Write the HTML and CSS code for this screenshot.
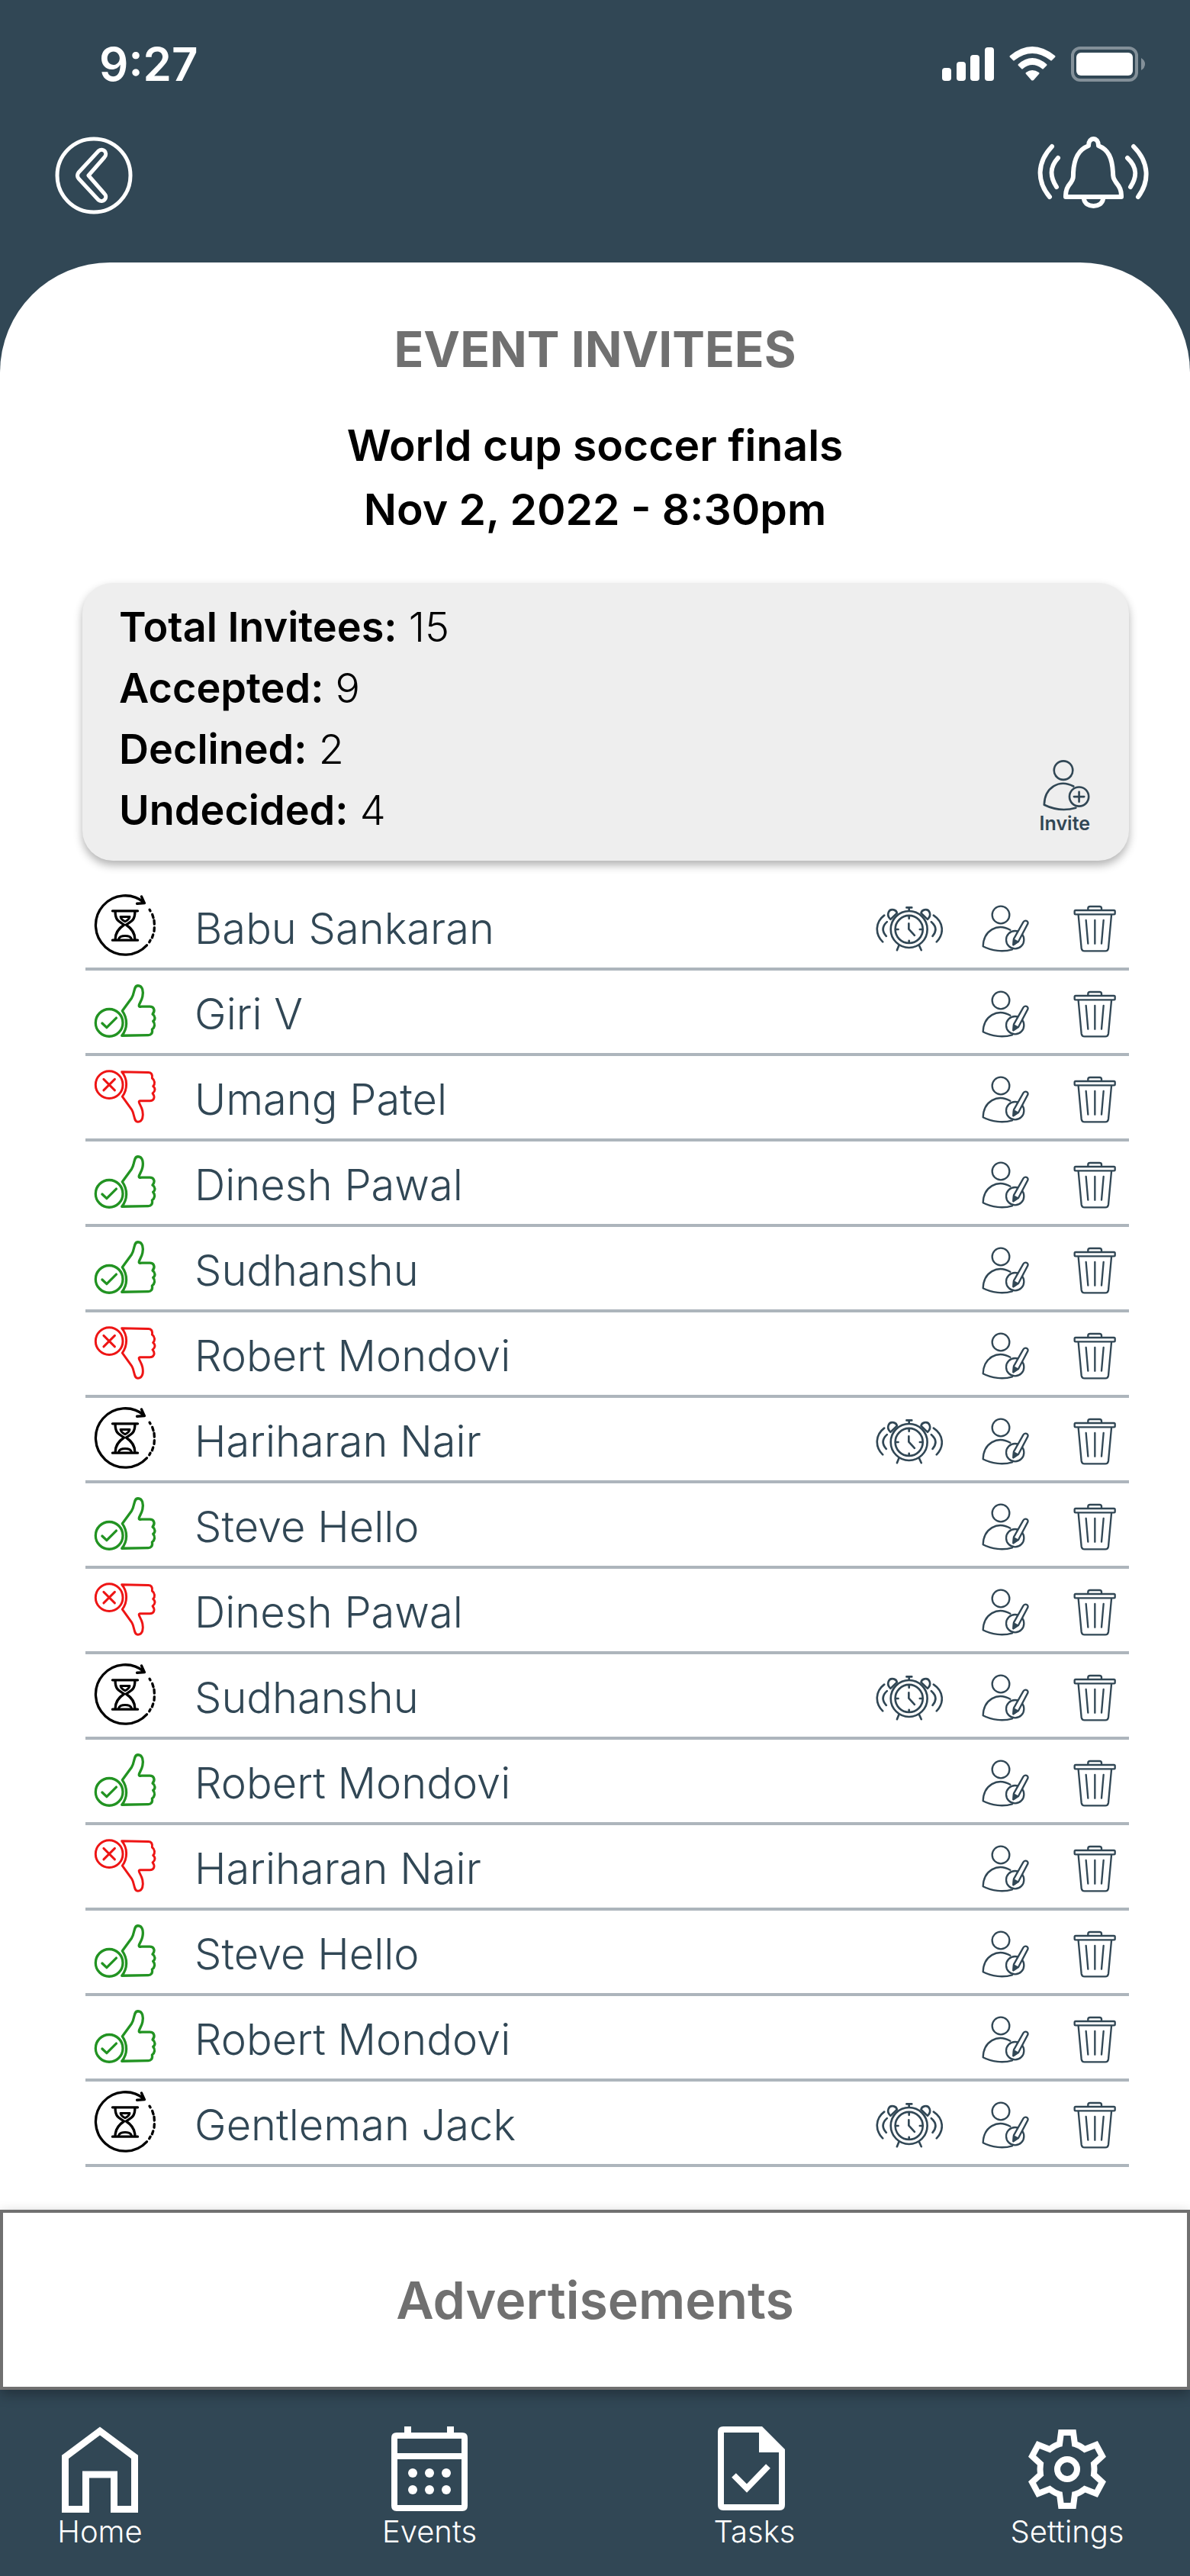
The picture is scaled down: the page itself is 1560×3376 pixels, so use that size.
FILE: index.html
```html
<!DOCTYPE html>
<html lang="en">
<head>
<meta charset="utf-8">
<meta name="viewport" content="width=device-width, initial-scale=1">
<title>Event Invitees</title>
<link rel="stylesheet" href="styles.css">
</head>
<body>
<svg class="sprite" aria-hidden="true">
  <symbol id="i-pending" viewBox="68 62 248 248">
    <g fill="none" stroke="#000" stroke-width="10" stroke-linecap="round" stroke-linejoin="round">
      <path d="M268 95A117 117 0 1 0 278 264M257 71L269 97L239 99"/>
      <path d="M289 123l3 5M300 142l4 13M307 165l1 15M308 194l-1 14M303 222l-4 12M292 244l-4 8"/>
      <path d="M142 128H242M142 244H242M153 131C153 170 172 170 188 183C165 198 153 215 153 241M231 131C231 170 212 170 196 183C219 198 231 215 231 241"/>
      <path d="M174 151H210C208 162 200 166 192 170C184 166 176 162 174 151ZM166 240C172 222 212 222 218 240" stroke-width="9"/>
    </g>
  </symbol>
  <symbol id="i-accepted" viewBox="68 410 248 215">
    <g fill="none" stroke="#229322" stroke-width="10" stroke-linecap="round" stroke-linejoin="round">
      <circle cx="129" cy="564" r="54"/>
      <path d="M101 566L119 583L157 545"/>
      <path d="M181 517L218 466C231 446 225 417 243 417C262 418 265 440 261 460C257 480 246 490 247 496C247 502 252 500 258 500H290C306 500 313 515 301 530C312 538 313 550 303 558C312 568 310 582 299 590C302 606 294 613 284 613L179 615C202 588 203 548 181 517Z"/>
    </g>
  </symbol>
  <symbol id="i-declined" viewBox="68 410 248 215">
    <g fill="none" stroke="#ee1515" stroke-width="9" stroke-linecap="round" stroke-linejoin="round" transform="translate(0 1035) scale(1 -1)">
      <circle cx="129" cy="564" r="54"/>
      <path d="M107 542L151 586M151 542L107 586"/>
      <path d="M181 517L218 466C231 446 225 417 243 417C262 418 265 440 261 460C257 480 246 490 247 496C247 502 252 500 258 500H290C306 500 313 515 301 530C312 538 313 550 303 558C312 568 310 582 299 590C302 606 294 613 284 613L179 615C202 588 203 548 181 517Z"/>
    </g>
  </symbol>
  <symbol id="i-alarm" viewBox="82 94 268 180">
    <g fill="none" stroke="#314755" stroke-width="8" stroke-linecap="round" stroke-linejoin="round">
      <circle cx="215" cy="187" r="73"/><circle cx="215" cy="187" r="55"/>
      <path d="M215 134V144M215 232V240M162 187H172M258 187H268M214 164V186L237 211M205 100H226M215 102V112M175 250L167 270M255 250L264 270"/>
      <path d="M141 147C122 128 134 104 154 109C162 111 166 117 167 122L141 147ZM289 147C308 128 296 104 276 109C268 111 264 117 263 122L289 147Z"/>
      <path d="M116 131C80 158 78 205 110 237M127 157C107 175 107 195 124 214M313 131C354 158 356 205 325 237M304 157C325 175 325 195 309 214"/>
    </g>
  </symbol>
  <symbol id="i-edit" viewBox="501 92 186 186">
    <g fill="none" stroke="#314755" stroke-width="7" stroke-linecap="round" stroke-linejoin="round">
      <circle cx="576" cy="131" r="34"/>
      <path d="M613 190C562 162 508 192 506 255C540 273 585 278 621 267"/>
      <circle cx="632" cy="229" r="35"/>
      <path d="M664 160L627 225L625 249L645 236L682 166C686 155 670 149 664 160Z" fill="#fff"/>
      <path d="M627 229L641 236L626 248Z" fill="#314755"/>
    </g>
  </symbol>
  <symbol id="i-trash" viewBox="862 92 168 186">
    <g fill="none" stroke="#314755" stroke-width="7" stroke-linecap="round" stroke-linejoin="round">
      <rect x="867" y="113" width="159" height="16" rx="4"/>
      <path d="M920 111V105Q920 98 928 98H965Q973 98 973 105V111M882 132L894 262Q896 273 906 273H988Q998 273 1000 262L1012 132M912 152L920 244M947 152V244M981 152L973 244"/>
    </g>
  </symbol>
</svg>

<div class="app">
  <header class="top">
    <div class="statusbar">
      <span class="clock">9:27</span>
      <div class="indicators">
        <svg width="68" height="46" viewBox="0 0 68 46" fill="#fff" role="img" aria-label="Signal">
          <rect x="0" y="28" width="12" height="17" rx="4"/><rect x="19" y="20" width="12" height="25" rx="4"/><rect x="37" y="11" width="12" height="34" rx="4"/><rect x="56" y="1" width="12" height="44" rx="4"/>
        </svg>
        <svg width="61" height="46" viewBox="0 0 61 46" fill="#fff" role="img" aria-label="Wi-Fi">
          <path d="M1 12Q30 -12 60 12Q61 13 60 14L56 18Q55 19 54 18Q30 0 7 18Q6 19 5 18L1 14Q0 13 1 12ZM12 23Q30 7 49 23Q50 24 49 25L45 29Q44 30 43 29Q30 19 18 29Q17 30 16 29L12 25Q11 24 12 23ZM22 34Q30 28 39 34Q40 35 39 36L32 44Q30 45 29 44L22 36Q21 35 22 34Z"/>
        </svg>
        <svg width="98" height="46" viewBox="0 0 98 46" role="img" aria-label="Battery">
          <rect x="2" y="2" width="84" height="42" rx="10" fill="none" stroke="#fff" stroke-opacity=".4" stroke-width="4"/>
          <rect x="7" y="8" width="74" height="30" rx="6" fill="#fff"/>
          <path d="M92 15Q97 18 97 23Q97 28 92 31Z" fill="#fff" fill-opacity=".4"/>
        </svg>
      </div>
    </div>
    <div class="toolbar">
      <button class="icon-btn" type="button" aria-label="Back">
        <svg width="102" height="102" viewBox="0 0 102 102" fill="none" stroke="#fff" stroke-width="5" stroke-linejoin="round">
          <circle cx="51" cy="51" r="48"/>
          <path d="M57 19L31 47Q28 51 31 55L57 83C63 88 70 80 65 75L44 51L65 27C70 21 63 14 57 19Z"/>
        </svg>
      </button>
      <button class="icon-btn" type="button" aria-label="Notifications">
        <svg width="146" height="94" viewBox="0 0 146 94" fill="none" stroke="#fff" stroke-width="6" stroke-linecap="round" stroke-linejoin="round">
          <path d="M67 12C67 0 80 0 80 12C93 17 98 28 99 47C99 54 100 55 103 60C108 66 110 70 110 79H37C37 70 39 66 44 60C47 55 47 54 47 47C48 28 54 17 67 12Z"/>
          <path d="M61 82C63 94 84 94 86 82"/>
          <path d="M19 13C-1 34 -1 59 16 79M27 28C16 40 16 52 25 66M126 13C147 34 147 59 132 79M118 28C131 40 131 52 122 66"/>
        </svg>
      </button>
    </div>
  </header>

  <main class="sheet">
    <h1 class="title">EVENT INVITEES</h1>
    <p class="event">World cup soccer finals<br>Nov 2, 2022 - 8:30pm</p>

    <section class="summary">
      <dl class="counts">
        <div><dt>Total Invitees:</dt> <dd>15</dd></div>
        <div><dt>Accepted:</dt> <dd>9</dd></div>
        <div><dt>Declined:</dt> <dd>2</dd></div>
        <div><dt>Undecided:</dt> <dd>4</dd></div>
      </dl>
      <button class="invite" type="button">
        <svg width="62" height="68" viewBox="741 103 186 205" fill="none" stroke="#314755" stroke-width="8" stroke-linecap="round" stroke-linejoin="round" aria-hidden="true">
          <circle cx="822" cy="147" r="37"/>
          <path d="M862 210C805 180 748 215 746 283C785 302 830 307 871 295M864 251H904M884 232V271"/>
          <circle cx="884" cy="251" r="38"/>
        </svg>
        Invite
      </button>
    </section>

    <ul class="list" id="invitees"></ul>
  </main>

  <aside class="ad">Advertisements</aside>

  <nav class="tabs">
    <a class="tab" href="#home">
      <svg width="100" height="113" viewBox="0 0 100 113" fill="none" stroke="#fff" stroke-width="9" aria-hidden="true"><path d="M4.500 40L50 6L95.500 40V108.500H68.500V63H31.500V108.500H4.500Z"/></svg>
      <span>Home</span>
    </a>
    <a class="tab" href="#events">
      <svg width="100" height="113" viewBox="0 0 100 113" fill="#fff" aria-hidden="true">
        <path fill-rule="evenodd" d="M7 8H17V0H26V8H73V0H82V8H93Q100 8 100 15V104Q100 111 93 111H7Q0 111 0 104V15Q0 8 7 8ZM8 16V35H92V16ZM8 43V103H92V43Z"/>
        <circle cx="28" cy="61" r="6"/><circle cx="50" cy="61" r="6"/><circle cx="72" cy="61" r="6"/><circle cx="28" cy="83" r="6"/><circle cx="50" cy="83" r="6"/><circle cx="72" cy="83" r="6"/>
      </svg>
      <span>Events</span>
    </a>
    <a class="tab" href="#tasks">
      <svg width="96" height="113" viewBox="0 0 96 113" aria-hidden="true">
        <path fill="#fff" fill-rule="evenodd" d="M7 0H58L88 30V103Q88 110 81 110H7Q0 110 0 103V7Q0 0 7 0ZM8 8V102H80V34H54V8Z"/>
        <path d="M21 64L38 81L66 52" fill="none" stroke="#fff" stroke-width="8"/>
      </svg>
      <span>Tasks</span>
    </a>
    <a class="tab" href="#settings">
      <svg width="104" height="113" viewBox="0 -4 104 113" fill="none" stroke="#fff" stroke-width="8" aria-hidden="true">
        <path d="M44 4H60L62 19Q69 21 75 26L90 20L98 35L87 45Q88 52 87 59L98 69L90 84L75 78Q69 83 62 85L60 100H44L42 85Q35 83 29 78L14 84L6 69L17 59Q16 52 17 45L6 35L14 20L29 26Q35 21 42 19Z"/>
        <circle cx="52" cy="52" r="13"/>
      </svg>
      <span>Settings</span>
    </a>
  </nav>
</div>
<script src="app.js"></script>
</body>
</html>
```
FILE: styles.css
```css
* { box-sizing: border-box; }

body {
  margin: 0;
  font-family: "Inter", "Liberation Sans", sans-serif;
  color: #000;
  background: #314755;
}

.sprite { position: absolute; width: 0; height: 0; }
svg { display: block; }

button {
  padding: 0;
  border: 0;
  background: none;
  font: inherit;
  color: inherit;
  cursor: pointer;
}

.app { min-height: 100vh; display: flex; flex-direction: column; }

.top { color: #fff; padding-bottom: 63px; }

.statusbar {
  display: flex;
  justify-content: space-between;
  align-items: center;
  padding: 48px 58px 0 130px;
}
.clock { font-size: 60px; line-height: 72px; font-weight: 600; }
.indicators { display: flex; gap: 20px; }

.toolbar {
  display: flex;
  justify-content: space-between;
  align-items: flex-start;
  padding: 59px 54px 0 72px;
}

.sheet {
  flex: 1;
  background: #fff;
  border-radius: 144px 144px 0 0;
  padding: 76px 80px 56px 108px;
}

.title {
  margin: 0 28px 0 0;
  text-align: center;
  font-size: 64px;
  line-height: 76px;
  font-weight: 700;
  color: #707070;
}
.event {
  margin: 46px 28px 0 0;
  text-align: center;
  font-size: 57px;
  line-height: 84px;
  font-weight: 600;
}

.summary {
  display: flex;
  justify-content: space-between;
  align-items: flex-end;
  margin-top: 54px;
  padding: 18px 51px 26px 48px;
  background: #eee;
  border-radius: 40px;
  box-shadow: 0 6px 12px rgba(0, 0, 0, .3);
}
.counts { margin: 0; font-size: 54px; line-height: 80px; }
.counts dt, .counts dd { display: inline; margin: 0; }
.counts dt { font-weight: 600; }
.counts dd { font-weight: 300; }

.invite {
  display: flex;
  flex-direction: column;
  align-items: flex-end;
  gap: 2px;
  padding-bottom: 9px;
  font-size: 25px;
  line-height: 28px;
  font-weight: 600;
  color: #314755;
}

.list { list-style: none; margin: 32px 0 0 4px; padding: 0; }
.row {
  display: flex;
  align-items: center;
  height: 112px;
  padding: 6px 17px 0 11px;
  border-bottom: 4px solid #adb5bc;
}
.status { width: 82px; height: 82px; margin-bottom: 8px; }
.name {
  flex: 1;
  margin-left: 50px;
  font-size: 56px;
  font-weight: 300;
  color: #314755;
}
.action-alarm svg { width: 88px; height: 60px; }
.action-edit { margin-left: 51px; }
.action-edit svg { width: 62px; height: 62px; }
.action-trash { margin-left: 58px; }
.action-trash svg { width: 56px; height: 62px; }

.ad {
  position: relative;
  padding: 72px 0;
  border: 4px solid #707070;
  background: #fff;
  box-shadow: 0 6px 16px rgba(0, 0, 0, .3);
  text-align: center;
  font-size: 68px;
  line-height: 84px;
  font-weight: 600;
  color: #707070;
}

.tabs {
  display: grid;
  grid-template-columns: 432fr 426fr 410fr 160px;
  padding: 48px 81px 33px 51px;
  background: #314755;
}
.tab {
  width: 160px;
  display: flex;
  flex-direction: column;
  align-items: center;
  font-size: 40px;
  line-height: 50px;
  font-weight: 300;
  color: #fff;
  text-decoration: none;
}
```
FILE: app.js
```javascript
const invitees = [
  ["Babu Sankaran", "pending"],
  ["Giri V", "accepted"],
  ["Umang Patel", "declined"],
  ["Dinesh Pawal", "accepted"],
  ["Sudhanshu", "accepted"],
  ["Robert Mondovi", "declined"],
  ["Hariharan Nair", "pending"],
  ["Steve Hello", "accepted"],
  ["Dinesh Pawal", "declined"],
  ["Sudhanshu", "pending"],
  ["Robert Mondovi", "accepted"],
  ["Hariharan Nair", "declined"],
  ["Steve Hello", "accepted"],
  ["Robert Mondovi", "accepted"],
  ["Gentleman Jack", "pending"]
];

const action = (kind, label) =>
  `<button class="action-${kind}" type="button" aria-label="${label}"><svg><use href="#i-${kind}"/></svg></button>`;

document.getElementById("invitees").innerHTML = invitees.map(([name, status]) => `
  <li class="row">
    <svg class="status" role="img" aria-label="${status}"><use href="#i-${status}"/></svg>
    <span class="name">${name}</span>
    ${status === "pending" ? action("alarm", "Remind " + name) : ""}
    ${action("edit", "Edit " + name)}
    ${action("trash", "Remove " + name)}
  </li>`).join("");
```
